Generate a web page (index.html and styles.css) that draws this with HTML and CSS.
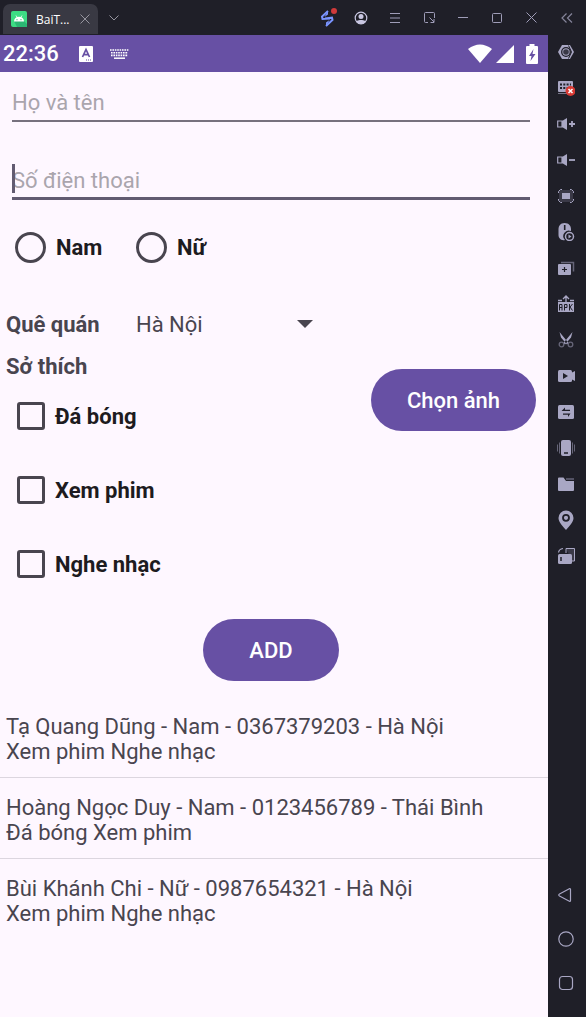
FILE: index.html
```
<!DOCTYPE html>
<html lang="vi">
<head>
<meta charset="utf-8">
<meta name="viewport" content="width=device-width, initial-scale=1">
<title>BaiTap</title>
<link rel="stylesheet" href="styles.css">
</head>
<body>
<div class="emulator">
  <header class="titlebar">
    <div class="tab">
      <svg class="tab-logo" width="16" height="16" viewBox="0 0 16 16"><rect width="16" height="16" rx="2" fill="#3ddc84"/><path d="M13 10l3 3v3H6l-3-6z" fill="#2bb673"/><path d="M3 10.500a5 4.800 0 0 1 10 0z" fill="#fff"/><path d="M5 4.500l1.500 2.500M11 4.500L9.500 7" stroke="#fff" stroke-width=".8"/><circle cx="6" cy="8.700" r=".6" fill="#2bb673"/><circle cx="10" cy="8.700" r=".6" fill="#2bb673"/></svg>
      <span class="tab-name">BaiT...</span>
      <button class="tab-close" aria-label="Close tab"><svg width="10" height="10" viewBox="0 0 10 10"><path d="M.5.5l9 9M9.500.5l-9 9" stroke="#96959f" fill="none"/></svg></button>
    </div>
    <button class="tab-more" aria-label="More tabs"><svg width="10" height="6" viewBox="0 0 10 6"><path d="M.5.5L5 5 9.500.5" stroke="#96959f" fill="none"/></svg></button>
    <div class="window-tools">
      <button class="tool" aria-label="Boost"><svg width="20" height="24" viewBox="0 0 20 24"><path d="M11 5L5 10.500l.5 2.500L13 12.500M9 20l6.500-6-.5-2.300L8 12.500" fill="none" stroke="#7a94ff" stroke-width="2"/><path d="M11 4.500v4L7.500 11zM9 20.500v-4l3.500-2.500z" fill="#7a94ff"/><circle cx="17" cy="5" r="3" fill="#d03a3a"/></svg></button>
      <button class="tool" aria-label="Account"><svg width="14" height="14" viewBox="0 0 14 14"><circle cx="7" cy="7" r="5.800" fill="none" stroke="#c9c7e2" stroke-width="1.200"/><circle cx="7" cy="5.500" r="2.500" fill="#c9c7e2"/><path d="M2 10.500Q4 8.500 7 9q3-.5 5 1.500Q10 13 7 13t-5-2.500z" fill="#c9c7e2"/></svg></button>
      <button class="tool" aria-label="Menu"><svg width="10" height="10" viewBox="0 0 10 10"><path d="M0 .5h10M0 5h10M0 9.500h10" stroke="#9f9db8"/></svg></button>
      <button class="tool" aria-label="Mini window"><svg width="11" height="11" viewBox="0 0 11 11"><path d="M4 10.500H1.500a1 1 0 0 1-1-1v-8a1 1 0 0 1 1-1h8a1 1 0 0 1 1 1V6M5.500 5.500l4.500 4.500M10 7v3.500H6.500" stroke="#9f9db8" fill="none"/></svg></button>
      <button class="tool" aria-label="Minimize"><svg width="10" height="10" viewBox="0 0 10 10"><path d="M0 4.500h10" stroke="#9f9db8"/></svg></button>
      <button class="tool" aria-label="Maximize"><svg width="10" height="10" viewBox="0 0 10 10"><rect x=".5" y=".5" width="9" height="9" rx="1" stroke="#9f9db8" fill="none"/></svg></button>
      <button class="tool" aria-label="Close"><svg width="11" height="11" viewBox="0 0 11 11"><path d="M.5.5l10 10M10.500.5l-10 10" stroke="#9f9db8"/></svg></button>
    </div>
    <button class="collapse" aria-label="Collapse toolbar"><svg width="12" height="10" viewBox="0 0 12 10"><path d="M5.500.5L1 5l4.500 4.500M11 .5L6.500 5 11 9.500" stroke="#85849a" stroke-width="1.200" fill="none"/></svg></button>
  </header>

  <main class="phone">
    <div class="statusbar">
      <span class="clock">22:36</span>
      <svg width="14" height="16" viewBox="0 0 14 16"><rect width="14" height="16" rx="1" fill="#fff"/><path d="M3.500 11L7 3.500 10.500 11M4.800 8.700h4.400" stroke="#6750a4" stroke-width="1.700" fill="none"/><path d="M7 14h6" stroke="#6750a4" stroke-dasharray="1 1"/></svg>
      <svg class="keyboard" width="19" height="10" viewBox="0 0 19 10"><path d="M0 1h19M1 3.700h17M1 6.400h17" stroke="#fff" stroke-width="1.600" stroke-dasharray="1.600 .8"/><path d="M4 9.200h11" stroke="#fff" stroke-width="1.500"/></svg>
      <div class="signals">
        <svg width="24" height="19" viewBox="0 0 24 19"><path d="M0 5Q12-4 24 5L12 19z" fill="#fff"/></svg>
        <svg class="cell" width="18" height="18" viewBox="0 0 18 18"><path d="M18 0v18H0z" fill="#fff"/></svg>
        <svg width="12" height="20" viewBox="0 0 12 20"><path d="M3.500 0h5v2H11q1 0 1 1v16q0 1-1 1H1q-1 0-1-1V3q0-1 1-1h2.500z" fill="#fff"/><path d="M7.500 5L3 12h2.500L4.500 17 9.500 10H6.500z" fill="#6750a4"/></svg>
      </div>
    </div>

    <form class="form">
      <div class="field"><input type="text" placeholder="Họ và tên" aria-label="Họ và tên"></div>
      <div class="field field-active"><input type="tel" placeholder="Số điện thoại" aria-label="Số điện thoại"></div>
      <div class="genders">
        <label class="choice"><input type="radio" name="gender">Nam</label>
        <label class="choice"><input type="radio" name="gender">Nữ</label>
      </div>
      <div class="hometown">
        <label for="hometown">Quê quán</label>
        <div class="spinner">
          <select id="hometown"><option>Hà Nội</option><option>Thái Bình</option></select>
        </div>
      </div>
      <div class="details">
        <div class="hobbies" role="group" aria-labelledby="hobby-title">
          <div class="hobby-title" id="hobby-title">Sở thích</div>
          <label class="choice"><input type="checkbox">Đá bóng</label>
          <label class="choice"><input type="checkbox">Xem phim</label>
          <label class="choice"><input type="checkbox">Nghe nhạc</label>
        </div>
        <button type="button" class="pill pick">Chọn ảnh</button>
      </div>
      <div class="actions"><button type="button" class="pill add">ADD</button></div>
    </form>

    <ul class="people">
      <li>Tạ Quang Dũng - Nam - 0367379203 - Hà Nội<br>Xem phim Nghe nhạc</li>
      <li>Hoàng Ngọc Duy - Nam - 0123456789 - Thái Bình<br>Đá bóng Xem phim</li>
      <li>Bùi Khánh Chi - Nữ - 0987654321 - Hà Nội<br>Xem phim Nghe nhạc</li>
    </ul>
  </main>

  <aside class="sidebar">
    <button aria-label="Settings"><svg viewBox="0 0 18 18"><path d="M5 2h8l4 7-4 7H5L1 9z" fill="#a9a7c4"/><circle cx="9" cy="9" r="4.300" fill="#a9a7c4" stroke="#1f1f28" stroke-width="1.300"/><circle cx="9" cy="9" r="2.800" fill="#3a3947"/><path d="M11.500 2.500l3 6.500-3 6.500" stroke="#1f1f28" fill="none"/></svg></button>
    <button aria-label="Keyboard off"><svg viewBox="0 0 18 18"><rect x="1" y="2" width="15" height="11" rx="1" fill="#a9a7c4"/><path d="M3 5.500h11M3 9h11" stroke="#1f1f28" stroke-width="2" stroke-dasharray="2 1.300"/><path d="M1 14.500h9" stroke="#777589"/><circle cx="13.500" cy="12" r="5" fill="#d83a34"/><path d="M11.500 10l4 4M15.500 10l-4 4" stroke="#fff" stroke-width="1.500"/></svg></button>
    <button aria-label="Volume up"><svg viewBox="0 0 18 18"><path d="M5 6L10 3v12l-5-3z" fill="#a9a7c4"/><path d="M5 6H.7v6H5z" fill="none" stroke="#a9a7c4" stroke-width="1.200"/><path d="M12 9h6M15 6v6" stroke="#a9a7c4" stroke-width="1.800"/></svg></button>
    <button aria-label="Volume down"><svg viewBox="0 0 18 18"><path d="M5 6L10 3v12l-5-3z" fill="#a9a7c4"/><path d="M5 6H.7v6H5z" fill="none" stroke="#a9a7c4" stroke-width="1.200"/><path d="M12 9h6" stroke="#a9a7c4" stroke-width="1.800"/></svg></button>
    <button aria-label="Full screen"><svg viewBox="0 0 18 18"><rect x="2" y="3" width="14" height="12" fill="#3a3947"/><path d="M1.500 6V4.500l2-2H5M13 2.500h1.500l2 2V6M16.500 12v1.500l-2 2H13M5 15.500H3.500l-2-2V12" fill="none" stroke="#a9a7c4"/><rect x="5" y="6" width="8" height="6" fill="#a9a7c4"/></svg></button>
    <button aria-label="Mouse recorder"><svg viewBox="0 0 18 18"><path d="M7.500 0C12 0 14 3 14 6v2a5.500 5.500 0 0 0-6 9C4 18 1.500 15 1.500 12V6c0-3 2-6 6-6z" fill="#a9a7c4"/><path d="M7.700 2v5" stroke="#1f1f28" stroke-width="1.600"/><circle cx="12.500" cy="13.500" r="4" fill="#1f1f28" stroke="#a9a7c4" stroke-width="1.500"/><path d="M11.500 11.500v4l3-2z" fill="#a9a7c4"/></svg></button>
    <button aria-label="Multi instance"><svg viewBox="0 0 18 18"><path d="M4 3.500h12.500v9" fill="none" stroke="#666578" stroke-width="1.500"/><rect x="1" y="5" width="13" height="11" rx="1" fill="#a9a7c4"/><path d="M5 10.500h5M7.500 8v5" stroke="#1f1f28" stroke-width="1.200"/></svg></button>
    <button aria-label="Install APK"><svg viewBox="0 0 18 18"><path d="M9 7V1M6 4l3-3 3 3M1 5.500h4M13 5.500h4" fill="none" stroke="#a9a7c4" stroke-width="1.300"/><rect x="1" y="7" width="16" height="10" fill="#a9a7c4"/><path d="M2.500 15.500v-6H5v6M2.500 12.500H5M7.500 15.500v-6H10v3H7.500M12.500 9v6.500M15.500 9l-2.500 3 2.500 3.500" fill="none" stroke="#1f1f28"/></svg></button>
    <button aria-label="Screenshot"><svg viewBox="0 0 18 18"><path d="M2.500 1l9 11-1.500 1.500-6-7zM15.500 1l-9 11L8 13.500l6-7z" fill="#a9a7c4"/><circle cx="4.500" cy="13.500" r="2.300" fill="none" stroke="#666578" stroke-width="1.300"/><circle cx="13.500" cy="13.500" r="2.300" fill="none" stroke="#666578" stroke-width="1.300"/></svg></button>
    <button aria-label="Record video"><svg viewBox="0 0 18 18"><rect x="1" y="3" width="14" height="12" rx="1.500" fill="#a9a7c4"/><path d="M14 6l4-2v10l-4-2z" fill="#a9a7c4"/><path d="M6 6v6l5-3z" fill="#1f1f28"/></svg></button>
    <button aria-label="File transfer"><svg viewBox="0 0 18 18"><rect x="1" y="2" width="16" height="14" rx="1.500" fill="#a9a7c4"/><path d="M4.500 8L8 4.500V6.700h5V8zM13.500 10.500L11 14v-2.200H6v-1.300z" fill="#1f1f28"/></svg></button>
    <button aria-label="Shake"><svg viewBox="0 0 18 18"><rect x="4" y="1" width="10" height="16" rx="2" fill="#a9a7c4"/><path d="M7 14h4" stroke="#1f1f28" stroke-width="1.500"/><path d="M2.500 3.500v11M15.500 3.500v11M.5 5.500v7M17.500 5.500v7" stroke="#666578"/></svg></button>
    <button aria-label="Shared folder"><svg viewBox="0 0 18 18"><path d="M1 3.500q0-1 1-1h4.500L9 6h8v9q0 1-1 1H2q-1 0-1-1z" fill="#a9a7c4"/><path d="M9 4h8" stroke="#666578" stroke-width="1.500"/></svg></button>
    <button aria-label="Location"><svg class="pin" viewBox="0 0 18 20"><path d="M9 .5a7.500 7.500 0 0 1 7.500 7.500c0 4-4 8-7.500 12C5.500 16 1.500 12 1.500 8A7.500 7.500 0 0 1 9 .5z" fill="#a9a7c4"/><circle cx="9" cy="7.800" r="3" fill="none" stroke="#1f1f28" stroke-width="1.800"/></svg></button>
    <button aria-label="Rotate"><svg viewBox="0 0 18 18"><path d="M9 1.500h8.500V14H15M9 1.500V6" fill="#3a3947" stroke="#a9a7c4"/><path d="M1.500 5.500q.5-3.500 4.500-4" fill="none" stroke="#a9a7c4" stroke-width="1.200"/><rect x="1" y="7" width="14" height="10" rx="1.500" fill="#a9a7c4"/><path d="M4 10v4" stroke="#1f1f28" stroke-width="1.500"/></svg></button>
    <div class="nav-keys">
      <button aria-label="Back"><svg viewBox="0 0 18 18"><path d="M12.800 2.500L2.500 8q-1.500 1 0 2l10.300 5.500q.7 0 .7-1v-11q0-1-.7-1z" fill="none" stroke="#a9a7c4" stroke-width="1.200"/></svg></button>
      <button aria-label="Home"><svg viewBox="0 0 18 18"><circle cx="9" cy="9" r="7.200" fill="none" stroke="#a9a7c4" stroke-width="1.200"/></svg></button>
      <button aria-label="Recent"><svg viewBox="0 0 18 18"><rect x="2.500" y="2.500" width="13" height="13" rx="3" fill="none" stroke="#a9a7c4" stroke-width="1.200"/></svg></button>
    </div>
  </aside>
</div>
</body>
</html>
```
FILE: styles.css
```
* { box-sizing: border-box; }

body {
  margin: 0;
  background: #1f1f28;
  font-family: Roboto, "Noto Sans", sans-serif;
  font-size: 22px;
  line-height: 25px;
  color: #49454f;
}

button {
  border: 0;
  padding: 0;
  background: none;
  font: inherit;
  color: inherit;
  cursor: pointer;
}

svg { display: block; flex: none; }

.emulator {
  display: grid;
  grid-template-columns: 1fr 38px;
  grid-template-rows: 35px 1fr;
  min-height: 100vh;
}

/* Window title bar */
.titlebar {
  grid-column: 1 / -1;
  display: flex;
  align-items: center;
}

.tab {
  display: flex;
  align-items: center;
  align-self: flex-start;
  width: 95px;
  height: 30px;
  margin: 4px 0 0 3px;
  padding: 0 8px;
  border-radius: 7px 7px 0 0;
  background: #393943;
}

.tab-name {
  flex: 1;
  margin-left: 9px;
  font-family: "Open Sans", sans-serif;
  font-size: 12px;
  color: #fff;
}

.tab-more { padding: 8px 11px; }

.window-tools { display: flex; margin-left: auto; }

.tool, .collapse, .sidebar button {
  display: flex;
  align-items: center;
  justify-content: center;
}

.tool { width: 34px; height: 34px; }
.collapse { width: 38px; height: 35px; }

/* Phone screen */
.phone { background: #fef7ff; }

.statusbar {
  display: flex;
  align-items: center;
  height: 37px;
  padding: 0 10px 0 3px;
  background: #6750a4;
  color: #fff;
}

.clock { margin-right: 20px; font-weight: 500; }
.keyboard { margin-left: 17px; }
.signals { display: flex; align-items: center; margin-left: auto; }
.cell { margin: 0 12px 0 4px; }

.form { padding-top: 8px; }

.field {
  position: relative;
  height: 42px;
  margin: 0 18px 36px 12px;
  border-bottom: 2px solid #77717e;
}

.field input {
  width: 100%;
  height: 40px;
  padding: 4px 0 0;
  border: 0;
  outline: 0;
  background: none;
  font: inherit;
  color: #1d1b20;
}

.field input::placeholder { color: #aaa5ad; opacity: 1; }

.field-active {
  margin-bottom: 10px;
  border-bottom: 3px solid #625b71;
}

.field-active::before {
  content: "";
  position: absolute;
  top: 6px;
  left: 0;
  width: 3px;
  height: 29px;
  background: #625b71;
}

.genders { display: flex; }
.genders .choice { width: 121px; }

.choice {
  display: flex;
  align-items: center;
  height: 74px;
  padding-left: 17px;
  gap: 10px;
  font-weight: 700;
  color: #1d1b20;
}

.choice input {
  appearance: none;
  flex: none;
  width: 28px;
  height: 28px;
  margin: 0;
  border: 3px solid #49454f;
  border-radius: 3px;
}

.genders .choice { padding-left: 15px; }
.genders .choice input { width: 31px; height: 31px; border-radius: 50%; }
.choice input:checked { background: #6750a4; }

.hometown {
  display: flex;
  align-items: center;
  height: 70px;
  padding: 10px 0 0 6px;
}

.hometown label { width: 130px; font-weight: 700; }

.spinner { position: relative; width: 180px; }

.spinner::after {
  content: "";
  position: absolute;
  top: 8px;
  right: 3px;
  border: 8px solid transparent;
  border-top-color: #49454f;
  border-bottom: 0;
  pointer-events: none;
}

.spinner select {
  appearance: none;
  width: 100%;
  padding: 0;
  border: 0;
  background: none;
  font: inherit;
  color: inherit;
}

.details {
  display: flex;
  align-items: flex-start;
  justify-content: space-between;
  padding-right: 12px;
}

.hobby-title { padding-left: 6px; font-weight: 700; }

.pill {
  height: 62px;
  border-radius: 31px;
  background: #6750a4;
  font-weight: 500;
  color: #fff;
}

.pick { width: 165px; margin-top: 15px; }
.actions { display: flex; justify-content: center; padding: 18px 6px 16px 0; }
.add { width: 136px; }

.people { margin: 0; padding: 0; list-style: none; }
.people li { padding: 17px 6px 13px; }
.people li + li { border-top: 1px solid #dcd6df; }

/* Emulator toolbar */
.sidebar { display: flex; flex-direction: column; align-items: center; padding: 0 2px 15px 0; }
.sidebar button { width: 36px; height: 36px; padding-bottom: 2px; }
.sidebar svg { width: 18px; height: 18px; }
.sidebar .pin { height: 20px; }
.nav-keys { display: grid; gap: 8px; margin-top: auto; }
```
